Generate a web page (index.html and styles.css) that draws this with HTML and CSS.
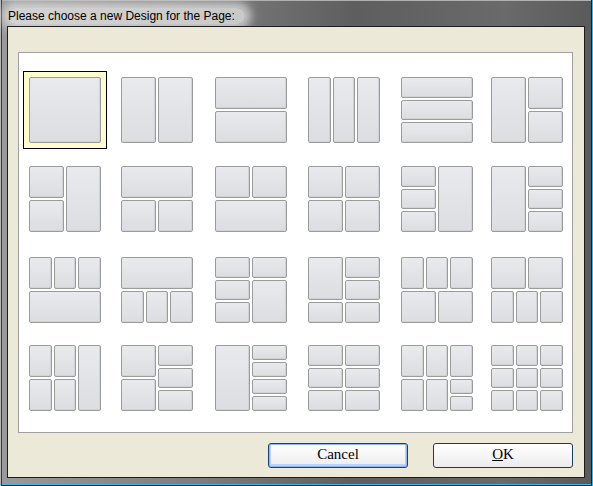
FILE: index.html
```html
<!DOCTYPE html>
<html>
<head>
<meta charset="utf-8">
<title>Design</title>
<link rel="stylesheet" href="styles.css">
</head>
<body>
<div class="window">
  <div class="titlebar"><span class="title">Please choose a new Design for the Page:</span></div>
  <div class="client">
    <div class="panel">
      <div class="grid">
        <!-- row 1 -->
        <div class="cell sel"><div class="t"><i></i></div></div>
        <div class="cell"><div class="t c2"><i></i><i></i></div></div>
        <div class="cell"><div class="t r2"><i></i><i></i></div></div>
        <div class="cell"><div class="t c3"><i></i><i></i><i></i></div></div>
        <div class="cell"><div class="t r3"><i></i><i></i><i></i></div></div>
        <div class="cell"><div class="t c2 r2"><i class="sr2"></i><i></i><i></i></div></div>
        <!-- row 2 -->
        <div class="cell"><div class="t c2 r2"><i></i><i class="sr2"></i><i></i></div></div>
        <div class="cell"><div class="t c2 r2"><i class="sc2"></i><i></i><i></i></div></div>
        <div class="cell"><div class="t c2 r2"><i></i><i></i><i class="sc2"></i></div></div>
        <div class="cell"><div class="t c2 r2"><i></i><i></i><i></i><i></i></div></div>
        <div class="cell"><div class="t c2 r3"><i></i><i class="sr3"></i><i></i><i></i></div></div>
        <div class="cell"><div class="t c2 r3"><i class="sr3"></i><i></i><i></i><i></i></div></div>
        <!-- row 3 -->
        <div class="cell"><div class="t c3 r2"><i></i><i></i><i></i><i class="sc3"></i></div></div>
        <div class="cell"><div class="t c3 r2"><i class="sc3"></i><i></i><i></i><i></i></div></div>
        <div class="cell"><div class="t c2 r3"><i></i><i></i><i></i><i class="sr2"></i><i></i></div></div>
        <div class="cell"><div class="t c2 r3"><i class="sr2"></i><i></i><i></i><i></i><i></i></div></div>
        <div class="cell"><div class="t c6 r2"><i class="sc2"></i><i class="sc2"></i><i class="sc2"></i><i class="sc3"></i><i class="sc3"></i></div></div>
        <div class="cell"><div class="t c6 r2"><i class="sc3"></i><i class="sc3"></i><i class="sc2"></i><i class="sc2"></i><i class="sc2"></i></div></div>
        <!-- row 4 -->
        <div class="cell"><div class="t c3 r2"><i></i><i></i><i class="sr2"></i><i></i><i></i></div></div>
        <div class="cell"><div class="t cols"><div class="col"><i></i><i></i></div><div class="col"><i></i><i></i><i></i></div></div></div>
        <div class="cell"><div class="t c2 r4"><i class="sr4"></i><i></i><i></i><i></i><i></i></div></div>
        <div class="cell"><div class="t c2 r3"><i></i><i></i><i></i><i></i><i></i><i></i></div></div>
        <div class="cell"><div class="t c3 r4"><i class="sr2"></i><i class="sr2"></i><i class="sr2"></i><i class="sr2"></i><i class="sr2"></i><i></i><i></i></div></div>
        <div class="cell"><div class="t c3 r3"><i></i><i></i><i></i><i></i><i></i><i></i><i></i><i></i><i></i></div></div>
      </div>
    </div>
    <div class="buttons">
      <button class="btn default">Cancel</button>
      <button class="btn"><u>O</u>K</button>
    </div>
  </div>
</div>
</body>
</html>
```

FILE: styles.css
```css
html, body {
  margin: 0;
  padding: 0;
}
body {
  width: 593px;
  height: 486px;
  overflow: hidden;
  background: #5a5a5a;
}
.window {
  width: 593px;
  height: 486px;
  box-sizing: border-box;
  padding: 0 9px 9px 8px;
  display: flex;
  flex-direction: column;
  background: linear-gradient(to right, #9a9a9a 0%, #7c7c7c 35%, #5e5e5e 60%, #6a6a6a 85%, #5a5a5a 100%);
  box-shadow:
    inset 1px 0 0 #b4b4b4,
    inset 2px 0 0 #3a3a3a,
    inset -1px 0 0 #3fb6ea,
    inset -2px 0 0 #1e1e1e,
    inset 0 -1px 0 #1a1a1a,
    inset 0 -2px 0 #3fb6ea,
    inset 0 1px 0 #b0b0b0;
}
.titlebar {
  height: 27px;
  flex: none;
  box-sizing: border-box;
  padding: 6px 0 0 0;
}
.title {
  display: inline-block;
  font-family: "Liberation Sans", Arial, sans-serif;
  font-size: 12px;
  line-height: 16px;
  color: #000;
  padding: 0 10px 0 0;
  border-radius: 10px;
  background: rgba(230, 230, 230, 0.75);
  box-shadow: 0 0 10px 6px rgba(230, 230, 230, 0.75);
}
.client {
  flex: 1;
  display: flex;
  flex-direction: column;
  background: #ece9d8;
  box-shadow: 0 0 0 1px #1c1c1c;
  padding: 25px 11px 9px 10px;
}
.panel {
  height: 381px;
  box-sizing: border-box;
  background: #fff;
  border: 1px solid #a0a0a0;
  padding: 18px 0 0 4px;
}
.grid {
  display: grid;
  grid-template-columns: 92px 94px 93px 93px 90px 84px;
  grid-template-rows: 89px 91px 88px 78px;
  justify-items: start;
  align-items: start;
}
.cell {
  padding: 5px;
  border: 1px solid transparent;
}
.cell.sel {
  border-color: #000;
  background: #fffdcf;
}
.t {
  width: 72px;
  height: 66px;
  display: grid;
  gap: 2px;
}
.t i {
  display: block;
  box-sizing: border-box;
  border: 1px solid #9b9b9b;
  border-radius: 2px;
  background: linear-gradient(#e9eaed, #dcdde1);
  box-shadow: inset -1px -1px 0 #d2d3d7;
}
.c2 { grid-template-columns: 1fr 1fr; }
.c3 { grid-template-columns: repeat(3, 1fr); }
.c6 { grid-template-columns: repeat(6, 1fr); }
.r2 { grid-template-rows: 1fr 1fr; }
.r3 { grid-template-rows: repeat(3, 1fr); }
.r4 { grid-template-rows: repeat(4, 1fr); }
.sr2 { grid-row: span 2; }
.sr3 { grid-row: span 3; }
.sr4 { grid-row: span 4; }
.sc2 { grid-column: span 2; }
.sc3 { grid-column: span 3; }
.t.cols {
  display: flex;
  gap: 2px;
}
.col {
  flex: 1;
  display: flex;
  flex-direction: column;
  gap: 2px;
}
.col i {
  flex: 1;
}
.buttons {
  margin-top: 10px;
  display: flex;
  justify-content: flex-end;
  gap: 25px;
}
.btn {
  width: 140px;
  height: 25px;
  box-sizing: border-box;
  margin: 0;
  padding: 0 0 2px 0;
  font-family: "Liberation Serif", "Times New Roman", serif;
  font-size: 15px;
  color: #000;
  border: 1px solid #1d3a5c;
  border-radius: 3px;
  background: linear-gradient(#ffffff 0%, #f6f6f6 50%, #ebebeb 100%);
}
.btn.default {
  border-color: #1f3f7a;
  box-shadow: inset 0 0 0 1px #8fb4f0, inset 0 -1px 0 2px #b9d2f7;
}
```
